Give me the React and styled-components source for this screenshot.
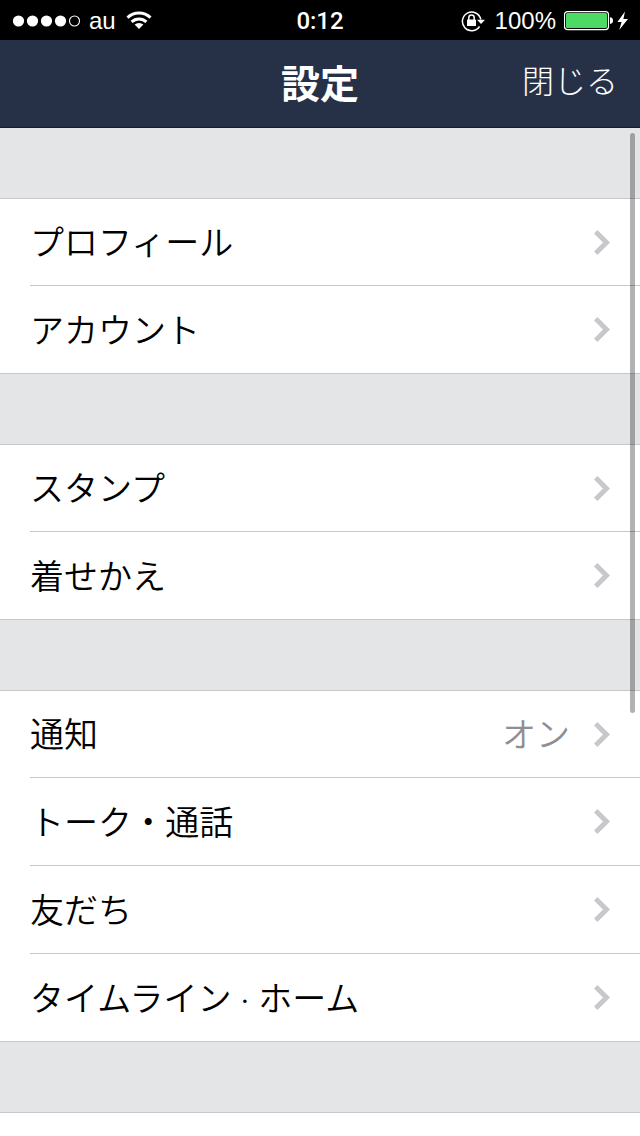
import React from "react";
import styled, { createGlobalStyle } from "styled-components";

const GlobalStyle = createGlobalStyle`
  * { box-sizing: border-box; }
  body { margin: 0; background: #e4e5e7; }
`;

const Screen = styled.div`
  display: flex;
  flex-direction: column;
  height: 100vh;
  overflow: hidden;
  color: #000;
  font-family: Lato, "Noto Sans CJK JP", sans-serif;
`;

const StatusBar = styled.div`
  display: grid;
  grid-template-columns: 1fr auto 1fr;
  align-items: center;
  flex: none;
  height: 40px;
  padding: 2px 12px 0;
  background: #000;
  color: #fff;
  font: 24px/38px "Liberation Sans", sans-serif;
`;

const StatusSide = styled.div`
  display: flex;
  align-items: center;
  justify-content: ${(p) => (p.$end ? "flex-end" : "flex-start")};
  gap: 10px;
`;

const Carrier = styled.span`
  display: flex;
  align-items: center;
  gap: 8px;
`;

const Clock = styled.time`
  font-family: Roboto, sans-serif;
  font-weight: 500;
`;

const NavBar = styled.header`
  display: grid;
  grid-template-columns: 1fr auto 1fr;
  align-items: center;
  flex: none;
  height: 88px;
  padding: 0 22px 2px;
  border-bottom: 1px solid #141c33;
  background: #263147;
  color: #fff;
`;

const Title = styled.h1`
  grid-column: 2;
  margin: 0;
  font-size: 39px;
  font-weight: 700;
  line-height: 48px;
`;

const CloseButton = styled.button`
  justify-self: end;
  padding: 0 0 4px;
  border: 0;
  background: none;
  color: inherit;
  font: 300 32px/48px Lato, "Noto Sans CJK JP", sans-serif;
`;

const Content = styled.main`
  position: relative;
  display: flex;
  flex: 1;
  flex-direction: column;
  gap: 70px;
  min-height: 0;
  padding-top: 70px;
  overflow: hidden;
  background: #e4e5e7;
`;

const Group = styled.ul`
  flex: none;
  margin: 0;
  padding: 0;
  list-style: none;
  background: #fff;
`;

const NextGroup = styled.div`
  flex: 1 0 0;
  border-top: 1px solid #c8c7cc;
  background: #fff;
`;

const RowButton = styled.button`
  display: flex;
  align-items: center;
  gap: 24px;
  width: 100%;
  height: 100%;
  padding: 0 30px 0 0;
  border: 0;
  border-bottom: 1px solid #c8c7cc;
  background: none;
  color: #000;
  font: 350 34px/48px Lato, "Noto Sans CJK JP", sans-serif;
  text-align: left;
`;

const Row = styled.li`
  height: 88px;
  padding-left: 30px;

  &:first-child { border-top: 1px solid #c8c7cc; }
  &:last-child { border-bottom: 1px solid #c8c7cc; }
  &:last-child ${RowButton} { border-bottom: 0; }
`;

const Label = styled.span`
  flex: 1;
`;

const Value = styled.span`
  color: #8e8e93;
`;

const ScrollThumb = styled.div`
  position: absolute;
  top: 5px;
  right: 5px;
  width: 5px;
  height: 580px;
  border-radius: 3px;
  background: rgba(0, 0, 0, 0.3);
`;

const SignalIcon = () => (
  <svg width="69" height="12" viewBox="0 0 69 12" aria-hidden="true">
    {[6.5, 20.5, 34.5, 48.5].map((x) => (
      <circle key={x} cx={x} cy="6" r="5.6" fill="#fff" />
    ))}
    <circle cx="62.5" cy="6" r="5" fill="none" stroke="#fff" strokeWidth="1.1" />
  </svg>
);

const WifiIcon = () => (
  <svg width="26" height="20" viewBox="0 0 26 20" fill="none" stroke="#fff" strokeWidth="3" aria-hidden="true">
    <path d="M1.5 6.6 A16.5 16.5 0 0 1 24.5 6.6" />
    <path d="M5.6 10.9 A10.6 10.6 0 0 1 20.4 10.9" />
    <path d="M8.6 13.6 A6.5 6.5 0 0 1 17.4 13.6 L13 18 Z" fill="#fff" stroke="none" />
  </svg>
);

const LockIcon = () => (
  <svg width="24" height="22" viewBox="0 0 24 22" aria-hidden="true">
    <path d="M18.6 16.3 A9.3 9.3 0 1 1 19.8 9.5" fill="none" stroke="#fff" strokeWidth="1.5" />
    <path d="M16 9.8 H24 L20 14 Z" fill="#fff" />
    <rect x="6" y="9.5" width="9" height="6.5" rx="0.6" fill="#fff" />
    <path d="M7.8 10 V7.8 A2.7 2.7 0 0 1 13.2 7.8 V10" fill="none" stroke="#fff" strokeWidth="1.5" />
  </svg>
);

const BatteryIcon = () => (
  <svg width="64" height="20" viewBox="0 0 64 20" aria-hidden="true">
    <rect x="0.5" y="0.6" width="44" height="18" rx="3" fill="none" stroke="#fff" strokeWidth="1.2" />
    <rect x="2" y="2" width="41" height="15" rx="1.5" fill="#4cd964" />
    <path d="M46 6.2 Q49 6.5 49 9.6 Q49 12.7 46 13 Z" fill="#fff" />
    <path d="M61 0.5 L53.4 11 H57.6 L55.2 19 L64 8 H59.4 Z" fill="#fff" />
  </svg>
);

const Chevron = () => (
  <svg width="16" height="25" viewBox="0 0 16 25" aria-hidden="true">
    <path d="M3.4 0 L16 12.5 L3.4 25 L0 21.6 L9 12.5 L0 3.4 Z" fill="#c7c7cc" />
  </svg>
);

const groups = [
  [{ label: "プロフィール" }, { label: "アカウント" }],
  [{ label: "スタンプ" }, { label: "着せかえ" }],
  [
    { label: "通知", value: "オン" },
    { label: "トーク・通話" },
    { label: "友だち" },
    { label: "タイムライン · ホーム" },
  ],
];

export default function App() {
  return (
    <Screen lang="ja">
      <GlobalStyle />
      <StatusBar>
        <StatusSide>
          <Carrier>
            <SignalIcon />
            au
          </Carrier>
          <WifiIcon />
        </StatusSide>
        <Clock>0:12</Clock>
        <StatusSide $end>
          <LockIcon />
          <Carrier>
            100%
            <BatteryIcon />
          </Carrier>
        </StatusSide>
      </StatusBar>
      <NavBar>
        <Title>設定</Title>
        <CloseButton type="button">閉じる</CloseButton>
      </NavBar>
      <Content>
        {groups.map((rows) => (
          <Group key={rows[0].label}>
            {rows.map(({ label, value }) => (
              <Row key={label}>
                <RowButton type="button">
                  <Label>{label}</Label>
                  {value && <Value>{value}</Value>}
                  <Chevron />
                </RowButton>
              </Row>
            ))}
          </Group>
        ))}
        <NextGroup />
        <ScrollThumb />
      </Content>
    </Screen>
  );
}
